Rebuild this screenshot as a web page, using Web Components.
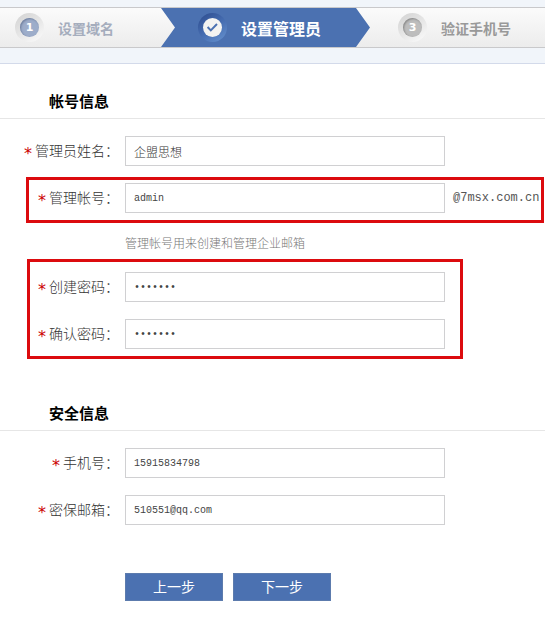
<!DOCTYPE html>
<html lang="zh-CN">
<head>
<meta charset="utf-8">
<title>设置管理员</title>
<style>
  body {
    margin: 0;
    background: #fff;
    font-family: "Liberation Mono", "Noto Sans CJK SC", sans-serif;
    font-size: 14px;
    color: #555;
  }
</style>
</head>
<body>
<step-bar>
  <step-item state="done" number="1">设置域名</step-item>
  <step-item state="current">设置管理员</step-item>
  <step-item state="next" number="3">验证手机号</step-item>
</step-bar>

<form-section heading="帐号信息">
  <form-field label="管理员姓名" value="企盟思想"></form-field>
  <mark-frame wide>
    <form-field label="管理帐号" value="admin" latin>@7msx.com.cn</form-field>
  </mark-frame>
  <form-hint>管理帐号用来创建和管理企业邮箱</form-hint>
  <mark-frame>
    <form-field label="创建密码" type="password" value="1234567" latin></form-field>
    <form-field label="确认密码" type="password" value="1234567" latin></form-field>
  </mark-frame>
</form-section>

<form-section heading="安全信息">
  <form-field label="手机号" type="tel" value="15915834798" latin></form-field>
  <form-field label="密保邮箱" type="email" value="510551@qq.com" latin></form-field>
</form-section>

<form-actions>
  <action-button>上一步</action-button>
  <action-button>下一步</action-button>
</form-actions>

<script>
class StepBar extends HTMLElement {
  constructor() {
    super();
    this.attachShadow({ mode: 'open' }).innerHTML = /*html*/ `
      <style>
        :host {
          display: block;
          padding: 7px 0 15px;
          background: #f1f5fa;
          border-bottom: 1px solid #d3daea;
        }
        nav {
          display: grid;
          grid-template-columns: 161px 209px 1fr;
          height: 39px;
          border: solid #c9c9cb;
          border-width: 1px 0;
          background: linear-gradient(#fbfbfb, #ececec);
        }
      </style>
      <nav><slot></slot></nav>
    `;
  }
}

class StepItem extends HTMLElement {
  constructor() {
    super();
    this.attachShadow({ mode: 'open' }).innerHTML = /*html*/ `
      <style>
        :host {
          display: flex;
          align-items: center;
          gap: 14px;
          padding-left: 15px;
          font: bold 14px/20px "Noto Sans CJK SC", sans-serif;
          white-space: nowrap;
          color: #a5adbd;
        }
        :host([state="current"]) {
          padding-left: 37px;
          font-size: 16px;
          color: #fff;
          background: #4b71b1;
          clip-path: polygon(0 0, 195px 0, 100% 50%, 195px 100%, 0 100%, 14px 50%);
        }
        :host([state="next"]) {
          padding-left: 28px;
          color: #999;
        }
        .ring {
          display: grid;
          place-items: center;
          width: 29px;
          height: 29px;
          border-radius: 50%;
          background: linear-gradient(145deg, #d2d2d2, #e6e6e6 50%, #fcfcfc);
        }
        .disc {
          display: grid;
          place-items: center;
          box-sizing: border-box;
          width: 19px;
          height: 19px;
          border-radius: 50%;
          font: bold 11px/19px "DejaVu Sans", sans-serif;
          color: #fff;
          background: #9dadca;
          box-shadow: inset 1px 1px 2px #6f7f9e;
        }
        :host([state="next"]) .disc {
          background: #bdbdbd;
          box-shadow: inset 1px 1px 2px #888;
        }
        :host([state="current"]) .ring {
          background: linear-gradient(145deg, #2c4b8d, #456cb0 50%, #6793d0);
        }
        :host([state="current"]) .disc {
          background: #f3f3f1;
          box-shadow: none;
        }
      </style>
      <span class="ring"><span class="disc"></span></span>
      <slot></slot>
    `;
  }

  connectedCallback() {
    const disc = this.shadowRoot.querySelector('.disc');
    if (this.getAttribute('state') === 'current') {
      disc.innerHTML = /*html*/ `
        <svg width="19" height="19" viewBox="0 0 19 19" fill="none" aria-hidden="true">
          <path d="M4.6 9 L7.8 12.4 L14 6" stroke="#4b71b1" stroke-width="2"/>
        </svg>
      `;
    } else {
      disc.textContent = this.getAttribute('number');
    }
  }
}

class FormSection extends HTMLElement {
  constructor() {
    super();
    this.attachShadow({ mode: 'open' }).innerHTML = /*html*/ `
      <style>
        :host {
          display: block;
        }
        :host(:not(:first-of-type)) {
          margin-top: 27px;
        }
        h2 {
          margin: 0;
          padding: 26px 0 6px 49px;
          border-bottom: 1px solid #e6e6e6;
          font: bold 15px/22px "Noto Sans CJK SC", sans-serif;
          color: #000;
        }
        .rows {
          display: flex;
          flex-direction: column;
          gap: 17px;
          padding-top: 17px;
        }
      </style>
      <h2></h2>
      <div class="rows"><slot></slot></div>
    `;
  }

  connectedCallback() {
    this.shadowRoot.querySelector('h2').textContent = this.getAttribute('heading');
  }
}

class FormField extends HTMLElement {
  constructor() {
    super();
    this.attachShadow({ mode: 'open' }).innerHTML = /*html*/ `
      <style>
        :host {
          display: grid;
          grid-template-columns: 119px minmax(0, 320px) auto;
          justify-content: start;
          align-items: center;
          column-gap: 6px;
        }
        label {
          display: flex;
          justify-content: flex-end;
          gap: 3px;
          padding-bottom: 2px;
          line-height: 28px;
          white-space: nowrap;
          font-family: "Noto Sans CJK SC", sans-serif;
          font-weight: 300;
          color: #333;
        }
        .star {
          padding-top: 4px;
          font: 16px/28px "DejaVu Sans", sans-serif;
          height: 24px;
          color: #c00;
        }
        input {
          box-sizing: border-box;
          width: 100%;
          height: 30px;
          margin: 0;
          padding: 0 8px;
          border: 1px solid #d0d0d2;
          border-radius: 0;
          outline: none;
          background: #fff;
          font: 300 12px/18px "Noto Sans CJK SC", sans-serif;
          color: #333;
        }
        :host([latin]) input {
          font: 10px/18px "Liberation Mono", monospace;
          color: #444;
        }
        .suffix {
          padding-left: 2px;
          font: 12px/18px "Liberation Mono", monospace;
          white-space: nowrap;
        }
      </style>
      <label for="field"><span class="star">*</span><span class="name"></span></label>
      <input id="field">
      <span class="suffix"><slot></slot></span>
    `;
  }

  connectedCallback() {
    const input = this.shadowRoot.querySelector('input');
    input.type = this.getAttribute('type') || 'text';
    input.value = this.getAttribute('value') || '';
    this.shadowRoot.querySelector('.name').textContent = this.getAttribute('label') + '：';
  }
}

class FormHint extends HTMLElement {
  constructor() {
    super();
    this.attachShadow({ mode: 'open' }).innerHTML = /*html*/ `
      <style>
        :host {
          display: block;
          padding-left: 125px;
          font: 300 12px/25px "Noto Sans CJK SC", sans-serif;
          color: #777;
        }
      </style>
      <slot></slot>
    `;
  }
}

// red highlight drawn over a group of rows
class MarkFrame extends HTMLElement {
  constructor() {
    super();
    this.attachShadow({ mode: 'open' }).innerHTML = /*html*/ `
      <style>
        :host {
          position: relative;
          display: flex;
          flex-direction: column;
          gap: 17px;
          max-width: 463px;
        }
        :host([wide]) {
          max-width: none;
        }
        .frame {
          position: absolute;
          inset: -13px 0 -10px 27px;
          border: 3px solid #dc0b0e;
          pointer-events: none;
        }
        :host([wide]) .frame {
          inset: -6px 1px -10px 26px;
        }
      </style>
      <slot></slot>
      <div class="frame"></div>
    `;
  }
}

class FormActions extends HTMLElement {
  constructor() {
    super();
    this.attachShadow({ mode: 'open' }).innerHTML = /*html*/ `
      <style>
        :host {
          display: flex;
          gap: 10px;
          padding: 48px 0 24px 125px;
        }
      </style>
      <slot></slot>
    `;
  }
}

class ActionButton extends HTMLElement {
  constructor() {
    super();
    this.attachShadow({ mode: 'open' }).innerHTML = /*html*/ `
      <style>
        :host {
          display: block;
        }
        button {
          display: block;
          width: 98px;
          height: 28px;
          padding: 0 0 2px;
          border: 1px solid #5c7bad;
          background: #4b71b1;
          font: 14px/24px "Noto Sans CJK SC", sans-serif;
          color: #fff;
          cursor: pointer;
        }
      </style>
      <button type="button"><slot></slot></button>
    `;
  }
}

customElements.define('step-bar', StepBar);
customElements.define('step-item', StepItem);
customElements.define('form-section', FormSection);
customElements.define('form-field', FormField);
customElements.define('form-hint', FormHint);
customElements.define('mark-frame', MarkFrame);
customElements.define('form-actions', FormActions);
customElements.define('action-button', ActionButton);
</script>
</body>
</html>
